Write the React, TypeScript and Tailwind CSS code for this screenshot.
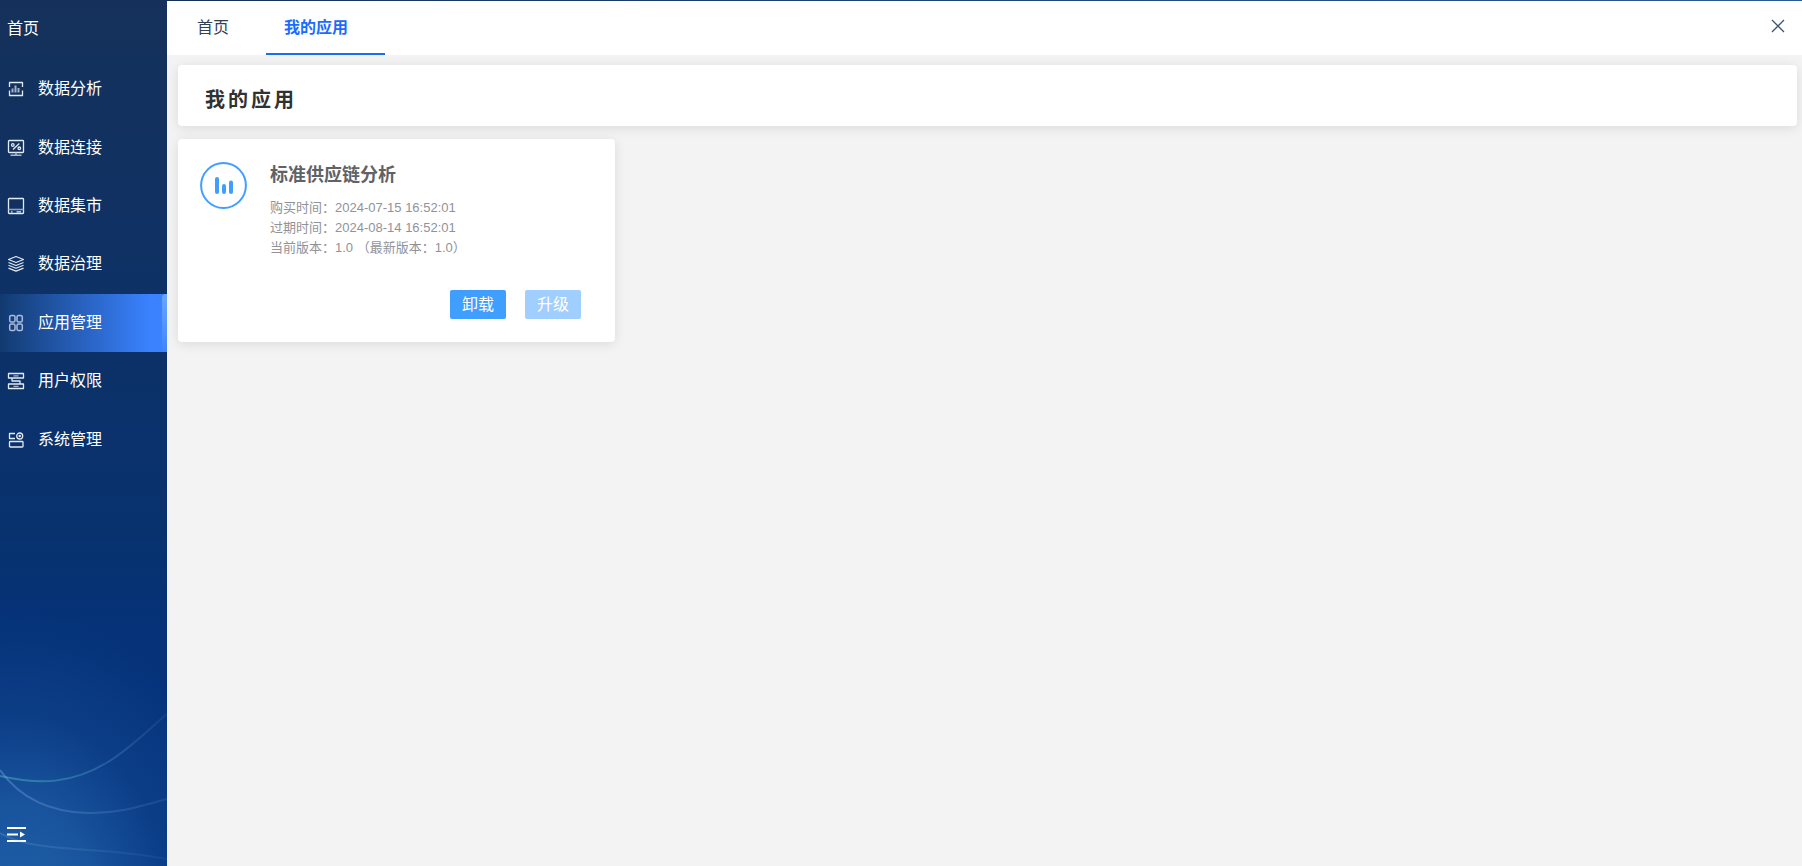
import React, { useState } from "react";
import clsx from "clsx";

const menuItems = [
  { id: "analysis", name: "数据分析" },
  { id: "connect", name: "数据连接" },
  { id: "market", name: "数据集市" },
  { id: "govern", name: "数据治理" },
  { id: "apps", name: "应用管理" },
  { id: "users", name: "用户权限" },
  { id: "system", name: "系统管理" },
];

const tabs = ["首页", "我的应用"];

const apps = [
  {
    name: "标准供应链分析",
    boughtAt: "2024-07-15 16:52:01",
    expiresAt: "2024-08-14 16:52:01",
    version: "1.0",
    latest: "1.0",
  },
];

function MenuIcon({ id }: { id: string }) {
  return (
    <svg
      width="18"
      height="18"
      viewBox="0 0 18 18"
      fill="none"
      stroke="#e4eaf3"
      strokeWidth="1.3"
      strokeLinejoin="round"
      className="shrink-0"
      aria-hidden="true"
    >
      {id === "analysis" && (
        <>
          <path d="M2.5 7V2.5h13V7M2.5 10.5v5h13v-5" />
          <path d="M5.5 8.5v4M8.5 5.5v7M11.5 8v4.500" stroke="#a3b2ca" strokeWidth="2" />
        </>
      )}
      {id === "connect" && (
        <>
          <rect x="1.5" y="1.5" width="15" height="12" rx="0.8" />
          <circle cx="5.8" cy="6" r="1.3" />
          <circle cx="12.3" cy="9.3" r="1.3" />
          <path d="M12.3 4.5 6 10.5" />
          <path d="M9 13.5V16M3.5 16.2h11" stroke="#a9b7cd" strokeWidth="1.5" />
        </>
      )}
      {id === "market" && (
        <>
          <rect x="1.5" y="1.5" width="15" height="15" rx="0.8" />
          <path d="M1.5 12.5h15" stroke="#8fa1bd" strokeWidth="1.6" />
          <path d="M4 14.8h1.5M9.5 14.8H14" />
        </>
      )}
      {id === "govern" && (
        <g strokeWidth="1.2">
          <path d="M9 1.5 1.5 4.5 9 7.5l7.5-3z" />
          <path d="M1.5 7.5 9 10.5l7.5-3M1.5 10.3 9 13.3l7.5-3M1.5 13.1 9 16.1l7.5-3" />
        </g>
      )}
      {id === "apps" && (
        <g stroke="#a9bde0" strokeWidth="1.5">
          <rect x="2.7" y="1.5" width="5.3" height="6.5" rx="1.6" />
          <rect x="10" y="1.5" width="5.3" height="6.5" rx="1.6" />
          <rect x="2.7" y="10" width="5.3" height="6.5" rx="1.6" />
          <rect x="10" y="10" width="5.3" height="6.5" rx="1.6" />
        </g>
      )}
      {id === "users" && (
        <>
          <rect x="1.5" y="1.5" width="15" height="4.5" />
          <rect x="1.5" y="12" width="15" height="4.5" />
          <path d="M6.5 3.8h5M6.5 14.3h5" stroke="#a9b7cd" />
          <path d="M5 6v3h8v3" />
        </>
      )}
      {id === "system" && (
        <>
          <path d="M8 2.5H2.5v5H8" />
          <circle cx="12.7" cy="5" r="3" />
          <circle cx="12.7" cy="5" r="0.6" fill="#e4eaf3" />
          <rect x="2.5" y="10.5" width="13.5" height="5.5" rx="0.8" />
        </>
      )}
    </svg>
  );
}

// Faint light trails at the foot of the sidebar
function SidebarWaves() {
  return (
    <svg
      viewBox="0 0 167 226"
      preserveAspectRatio="none"
      className="pointer-events-none absolute bottom-0 left-0 h-[226px] w-full"
      fill="none"
      aria-hidden="true"
    >
      <defs>
        <linearGradient id="teal" x1="0" x2="1" y1="0" y2="0">
          <stop offset="0" stopColor="#4fc3c7" stopOpacity="0.45" />
          <stop offset="0.4" stopColor="#3f9cbf" stopOpacity="0.5" />
          <stop offset="1" stopColor="#5f8fd0" stopOpacity="0.12" />
        </linearGradient>
        <linearGradient id="pale" x1="0" x2="1" y1="0" y2="0">
          <stop offset="0" stopColor="#8fb3e6" stopOpacity="0.35" />
          <stop offset="1" stopColor="#6f9ad6" stopOpacity="0.15" />
        </linearGradient>
      </defs>
      <path d="M0 136C40 145 72 144 108 122C132 107 150 88 167 74" stroke="url(#teal)" strokeWidth="2" />
      <path d="M0 130C20 158 50 172 88 173C118 174 140 166 167 159" stroke="url(#pale)" strokeWidth="2" />
      <path d="M0 193C25 207 55 207 88 210C120 212 145 215 167 219" stroke="url(#pale)" strokeOpacity="0.6" strokeWidth="2" />
    </svg>
  );
}

function Sidebar() {
  const [active, setActive] = useState("apps");

  return (
    <aside className="relative flex w-[167px] shrink-0 flex-col text-base text-white bg-[radial-gradient(ellipse_230px_300px_at_10%_105%,#1f61a8_0%,#1d5ba4d0_35%,#144a9470_65%,#0a357800_100%),linear-gradient(180deg,#15315b_0%,#103163_25%,#08326f_62%,#053278_72%,#053580_100%)]">
      <SidebarWaves />
      <a href="#home" className="flex h-[58px] items-center px-[7px]">
        首页
      </a>
      <nav className="mt-0.5 grid h-[409px] grid-rows-7">
        {menuItems.map((item) => (
          <a
            key={item.id}
            href={"#" + item.id}
            onClick={() => setActive(item.id)}
            className={clsx(
              "relative flex items-center gap-[13px] px-[7px]",
              active === item.id && "bg-[linear-gradient(90deg,#123a70_0%,#3a82ff_90%)]"
            )}
          >
            <MenuIcon id={item.id} />
            <span>{item.name}</span>
            {active === item.id && (
              <span className="absolute inset-y-0 right-0 w-[5px] rounded-l bg-linear-to-b from-[#6ba5ff] to-[#3f84fb]" />
            )}
          </a>
        ))}
      </nav>
      <button type="button" aria-label="展开菜单" className="mt-auto mb-5 ml-[7px] w-5">
        <svg width="20" height="22" viewBox="0 0 20 22" fill="none" stroke="#fff" strokeWidth="2" aria-hidden="true">
          <path d="M0 4h19M0 10.5h11M0 17h19" />
          <path d="M13 7.5v6l5-3z" fill="#fff" stroke="none" />
        </svg>
      </button>
    </aside>
  );
}

function TabBar() {
  const [current, setCurrent] = useState("我的应用");

  return (
    <header className="flex h-[54px] items-stretch justify-between bg-white pl-3">
      <div className="flex">
        {tabs.map((tab) => (
          <button
            key={tab}
            type="button"
            onClick={() => setCurrent(tab)}
            className={clsx(
              "border-b-2 pt-0.5 pr-[37px] pl-[18px] text-base",
              current === tab
                ? "border-[#1a6cf0] font-bold text-[#1a6cff]"
                : "border-transparent text-[#304156]"
            )}
          >
            {tab}
          </button>
        ))}
      </div>
      <button type="button" aria-label="关闭" className="mr-4 mb-1 flex w-4 items-center justify-center">
        <svg width="14" height="14" viewBox="0 0 14 14" stroke="#3b5672" strokeWidth="1.3" aria-hidden="true">
          <path d="M1 1l12 12M13 1 1 13" />
        </svg>
      </button>
    </header>
  );
}

function AppCard({ app }: { app: (typeof apps)[number] }) {
  return (
    <article className="w-[27%] rounded bg-white pt-[23px] pr-[34px] pb-[23px] pl-[22px] shadow-[0_2px_12px_rgba(0,0,0,0.1)]">
      <div className="flex gap-[23px]">
        <svg width="47" height="47" viewBox="0 0 47 47" fill="none" className="shrink-0" aria-hidden="true">
          <circle cx="23.5" cy="23.5" r="22.4" stroke="#409eff" strokeWidth="2" />
          <g stroke="#409eff" strokeWidth="4" strokeLinecap="round">
            <path d="M17 17v13M24 24v6M31 20.500v9.500" />
          </g>
        </svg>
        <div className="text-[13px] leading-5 text-[#909399]">
          <h2 className="mb-2.5 text-lg leading-[26px] font-bold text-[#606266]">{app.name}</h2>
          <p>购买时间：{app.boughtAt}</p>
          <p>过期时间：{app.expiresAt}</p>
          <p>
            当前版本：{app.version} （最新版本：{app.latest}）
          </p>
        </div>
      </div>
      <div className="mt-8 flex justify-end gap-[19px] text-base text-white">
        <button type="button" className="h-[29px] w-14 rounded-xs bg-[#409eff]">
          卸载
        </button>
        <button type="button" disabled className="h-[29px] w-14 rounded-xs bg-[#a0cfff]">
          升级
        </button>
      </div>
    </article>
  );
}

export default function App() {
  return (
    <div className="flex min-h-screen bg-[#f3f3f3] font-['Liberation_Sans','Noto_Sans_CJK_SC',sans-serif]">
      <Sidebar />
      <div className="min-w-0 flex-1">
        <div className="h-px bg-linear-to-r from-[#14305c] to-[#2a5a92]" />
        <TabBar />
        <main className="pt-2.5 pr-[5px] pl-[11px]">
          <div className="flex h-[61px] items-center rounded bg-white px-[27px] pt-2 shadow-[0_2px_12px_rgba(0,0,0,0.1)]">
            <h1 className="text-xl font-bold tracking-[3px] text-[#303133]">我的应用</h1>
          </div>
          <section className="mt-[13px] flex flex-wrap gap-3">
            {apps.map((app) => (
              <AppCard key={app.name} app={app} />
            ))}
          </section>
        </main>
      </div>
    </div>
  );
}
